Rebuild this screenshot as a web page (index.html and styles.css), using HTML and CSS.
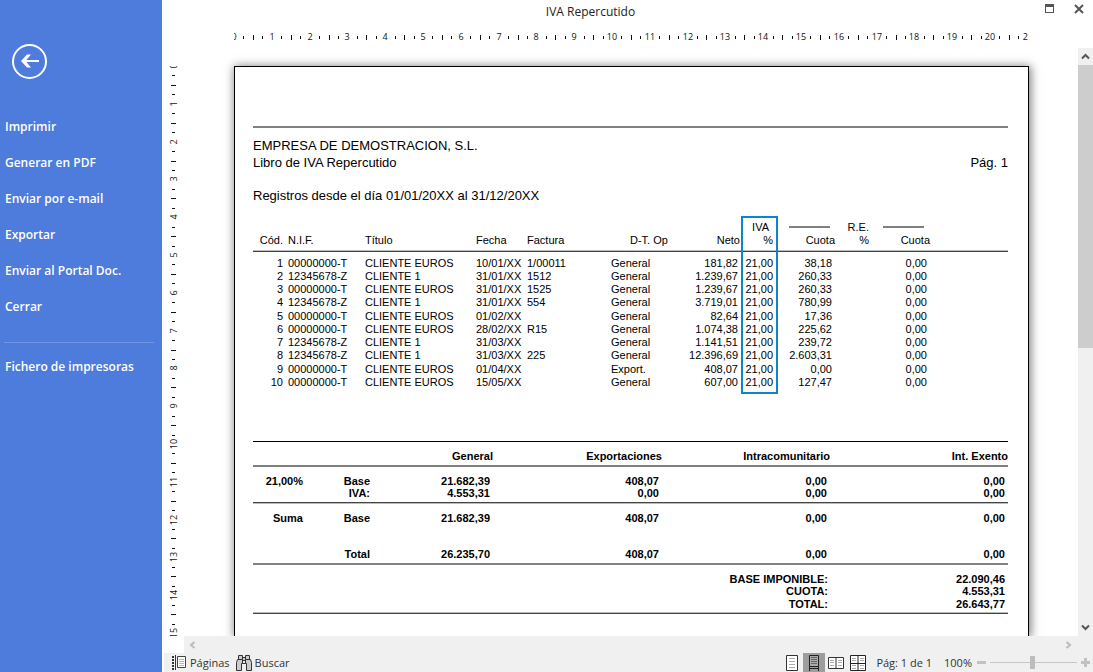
FILE: index.html
```html
<!DOCTYPE html>
<html lang="es">
<head>
<meta charset="utf-8">
<title>IVA Repercutido</title>
<link rel="stylesheet" href="styles.css">
</head>
<body>
<div class="app">
  <aside class="sidebar">
    <button class="back" type="button" aria-label="Volver">
      <svg width="35" height="35" viewBox="0 0 35 35" fill="none" stroke="#fff">
        <circle cx="17.5" cy="17.5" r="16.5" stroke-width="2"/>
        <path d="M10 17H27" stroke-width="2"/>
        <path d="M9 17L15 10.500H19L13.500 17L19 23.500H15Z" fill="#fff" stroke="none"/>
      </svg>
    </button>
    <nav class="menu">
      <button type="button">Imprimir</button>
      <button type="button">Generar en PDF</button>
      <button type="button">Enviar por e-mail</button>
      <button type="button">Exportar</button>
      <button type="button">Enviar al Portal Doc.</button>
      <button type="button">Cerrar</button>
      <hr>
      <button type="button">Fichero de impresoras</button>
    </nav>
  </aside>

  <main class="main">
    <header class="titlebar">
      <h1>IVA Repercutido</h1>
      <div class="window-buttons">
        <button type="button" aria-label="Maximizar">
          <svg width="10" height="10" viewBox="0 0 10 10"><path d="M0 0H9V9H0ZM1 3V8H8V3Z" fill="#555" fill-rule="evenodd"/></svg>
        </button>
        <button type="button" aria-label="Cerrar ventana">
          <svg width="10" height="10" viewBox="0 0 10 10"><path d="M1 1L9 9M9 1L1 9" stroke="#555" stroke-width="2"/></svg>
        </button>
      </div>
    </header>

    <div class="ruler-h"><svg id="ruler-h" width="100%" height="24"></svg></div>

    <div class="workspace">
      <div class="ruler-v"><svg id="ruler-v" width="22" height="100%"></svg></div>

      <div class="canvas">
        <article class="page">
          <div class="rule"></div>
          <div class="company">
            <p>EMPRESA DE DEMOSTRACION, S.L.</p>
            <div class="subtitle"><p>Libro de IVA Repercutido</p><p>Pág. 1</p></div>
          </div>
          <p class="range">Registros desde el día 01/01/20XX al 31/12/20XX</p>

          <div class="records-wrap">
            <table class="records">
              <colgroup>
                <col class="w-code"><col class="w-nif"><col class="w-name"><col class="w-date"><col class="w-invoice"><col class="w-type"><col class="w-net"><col class="w-vat"><col class="w-fee"><col class="w-pct"><col class="w-fee2"><col>
              </colgroup>
              <thead>
                <tr><th colspan="7"></th><th class="num vat">IVA</th><th><span class="bar"></span></th><th class="num">R.E.</th><th><span class="bar bar-wide"></span></th><th></th></tr>
                <tr><th class="num code">Cód.</th><th>N.I.F.</th><th>Título</th><th>Fecha</th><th>Factura</th><th class="type">D-T. Op</th><th class="num net">Neto</th><th class="num pct">%</th><th class="num">Cuota</th><th class="num">%</th><th class="num">Cuota</th><th></th></tr>
              </thead>
              <tbody>
                <tr><td>1</td><td>00000000-T</td><td>CLIENTE EUROS</td><td>10/01/XX</td><td>1/00011</td><td>General</td><td>181,82</td><td>21,00</td><td>38,18</td><td></td><td>0,00</td><td></td></tr>
                <tr><td>2</td><td>12345678-Z</td><td>CLIENTE 1</td><td>31/01/XX</td><td>1512</td><td>General</td><td>1.239,67</td><td>21,00</td><td>260,33</td><td></td><td>0,00</td><td></td></tr>
                <tr><td>3</td><td>00000000-T</td><td>CLIENTE EUROS</td><td>31/01/XX</td><td>1525</td><td>General</td><td>1.239,67</td><td>21,00</td><td>260,33</td><td></td><td>0,00</td><td></td></tr>
                <tr><td>4</td><td>12345678-Z</td><td>CLIENTE 1</td><td>31/01/XX</td><td>554</td><td>General</td><td>3.719,01</td><td>21,00</td><td>780,99</td><td></td><td>0,00</td><td></td></tr>
                <tr><td>5</td><td>00000000-T</td><td>CLIENTE EUROS</td><td>01/02/XX</td><td></td><td>General</td><td>82,64</td><td>21,00</td><td>17,36</td><td></td><td>0,00</td><td></td></tr>
                <tr><td>6</td><td>00000000-T</td><td>CLIENTE EUROS</td><td>28/02/XX</td><td>R15</td><td>General</td><td>1.074,38</td><td>21,00</td><td>225,62</td><td></td><td>0,00</td><td></td></tr>
                <tr><td>7</td><td>12345678-Z</td><td>CLIENTE 1</td><td>31/03/XX</td><td></td><td>General</td><td>1.141,51</td><td>21,00</td><td>239,72</td><td></td><td>0,00</td><td></td></tr>
                <tr><td>8</td><td>12345678-Z</td><td>CLIENTE 1</td><td>31/03/XX</td><td>225</td><td>General</td><td>12.396,69</td><td>21,00</td><td>2.603,31</td><td></td><td>0,00</td><td></td></tr>
                <tr><td>9</td><td>00000000-T</td><td>CLIENTE EUROS</td><td>01/04/XX</td><td></td><td>Export.</td><td>408,07</td><td>21,00</td><td>0,00</td><td></td><td>0,00</td><td></td></tr>
                <tr><td>10</td><td>00000000-T</td><td>CLIENTE EUROS</td><td>15/05/XX</td><td></td><td>General</td><td>607,00</td><td>21,00</td><td>127,47</td><td></td><td>0,00</td><td></td></tr>
              </tbody>
            </table>
            <div class="highlight"></div>
          </div>

          <table class="summary">
            <colgroup><col class="s-rate"><col class="s-concept"><col class="s-general"><col class="s-export"><col class="s-intra"><col></colgroup>
            <thead>
              <tr><th></th><th></th><th>General</th><th>Exportaciones</th><th>Intracomunitario</th><th>Int. Exento</th></tr>
            </thead>
            <tbody class="rate">
              <tr><th>21,00%</th><th>Base</th><td>21.682,39</td><td>408,07</td><td>0,00</td><td>0,00</td></tr>
              <tr><th></th><th>IVA:</th><td>4.553,31</td><td>0,00</td><td>0,00</td><td>0,00</td></tr>
            </tbody>
            <tbody class="sum">
              <tr><th>Suma</th><th>Base</th><td>21.682,39</td><td>408,07</td><td>0,00</td><td>0,00</td></tr>
              <tr><th></th><th>Total</th><td>26.235,70</td><td>408,07</td><td>0,00</td><td>0,00</td></tr>
            </tbody>
            <tfoot>
              <tr><th colspan="5">BASE IMPONIBLE:</th><td>22.090,46</td></tr>
              <tr><th colspan="5">CUOTA:</th><td>4.553,31</td></tr>
              <tr><th colspan="5">TOTAL:</th><td>26.643,77</td></tr>
            </tfoot>
          </table>
        </article>
      </div>

      <div class="scroll-v">
        <button type="button" aria-label="Subir"><svg width="9" height="7" viewBox="0 0 9 7"><path d="M1 5.500L4.500 2L8 5.500" fill="none" stroke="#555" stroke-width="2"/></svg></button>
        <div class="track"><div class="thumb"></div></div>
        <button type="button" aria-label="Bajar"><svg width="9" height="7" viewBox="0 0 9 7"><path d="M1 1.500L4.500 5L8 1.500" fill="none" stroke="#555" stroke-width="2"/></svg></button>
      </div>
    </div>

    <div class="scroll-h">
      <button type="button" aria-label="Izquierda"><svg width="7" height="8" viewBox="0 0 7 8"><path d="M5.500 1L2 4L5.500 7" fill="none" stroke="#bbb" stroke-width="2"/></svg></button>
      <button type="button" aria-label="Derecha"><svg width="7" height="8" viewBox="0 0 7 8"><path d="M1.500 1L5 4L1.500 7" fill="none" stroke="#bbb" stroke-width="2"/></svg></button>
    </div>

    <footer class="statusbar">
      <button class="tool" type="button">
        <svg width="15" height="15" viewBox="0 0 15 15"><path d="M1 1V15" stroke="#333" stroke-width="2" stroke-dasharray="2 1"/><path d="M3.500 0V15" stroke="#333"/><path d="M5.500 1.500H13.500V12.500H5.500Z" fill="#fff" stroke="#444"/><path d="M7 4.500H12M7 6.500H12M7 8.500H12M7 10.500H12" stroke="#bbb"/></svg>
        Páginas
      </button>
      <button class="tool" type="button">
        <svg width="16" height="16" viewBox="0 0 16 16" fill="#ccc" stroke="#333"><path d="M2.500 .500H6.500V4.500H2.500ZM9.500 .500H13.500V4.500H9.500ZM6.500 2.500H9.500V5.500H6.500Z"/><path d="M1.500 4.500H6.500V8.500H5.500V15.500H.500V7.500ZM9.500 4.500H14.500L15.500 7.500V15.500H10.500V8.500H9.500ZM6.500 5.500V8.500M9.500 5.500V8.500M6.500 8.500H9.500" /></svg>
        Buscar
      </button>
      <div class="views">
        <button type="button" aria-label="Una página"><svg width="12" height="16" viewBox="0 0 12 16"><path d="M.500 .500H11.500V15.500H.500Z" fill="#fff" stroke="#333"/><path d="M3 3.500H9M3 6.500H9M3 9.500H9M3 12.500H9" stroke="#aaa"/></svg></button>
        <button class="active" type="button" aria-label="Ancho de página"><svg width="12" height="16" viewBox="0 0 12 16"><path d="M1.500 .500H10.500V11.500H1.500Z" fill="#aaa" stroke="#222"/><path d="M3 2.500H9M3 4.500H9M3 6.500H9M3 8.500H9" stroke="#666"/><path d="M1.500 16V11.500H10.500V16M1.500 13.500H10.500" fill="none" stroke="#222"/></svg></button>
        <button type="button" aria-label="Dos páginas"><svg width="16" height="12" viewBox="0 0 16 12"><path d="M.500 .500H15.500V11.500H.500ZM8 .500V11.500" fill="#fff" stroke="#333"/><path d="M2 3.500H6M2 5.500H6M2 8.500H6M10 3.500H14M10 5.500H14M10 8.500H14" stroke="#aaa"/></svg></button>
        <button type="button" aria-label="Cuatro páginas"><svg width="16" height="16" viewBox="0 0 16 16"><path d="M.500 .500H15.500V15.500H.500ZM8 .500V15.500M.500 8.500H15.500" fill="#fff" stroke="#222"/><path d="M2 3.500H6M2 5.500H6M10 3.500H14M10 5.500H14M2 10.500H6M2 13.500H6M10 10.500H14M10 13.500H14" stroke="#aaa"/></svg></button>
      </div>
      <span class="page-count">Pág: 1 de 1</span>
      <label class="zoom-label" for="zoom">100%</label>
      <div class="zoom">
        <button type="button" aria-label="Reducir"><svg width="9" height="9" viewBox="0 0 9 9"><path d="M0 4.500H9" stroke="#c2c2c2" stroke-width="3"/></svg></button>
        <input id="zoom" type="range" min="0" max="200" value="98">
        <button type="button" aria-label="Ampliar"><svg width="9" height="9" viewBox="0 0 9 9"><path d="M0 4.500H9M4.500 0V9" stroke="#c2c2c2" stroke-width="3"/></svg></button>
      </div>
    </footer>
  </main>
</div>
<script src="rulers.js"></script>
</body>
</html>
```
FILE: styles.css
```css
* { box-sizing: border-box; }

body {
  margin: 0;
  font-family: "Open Sans", "Noto Sans", sans-serif;
  font-size: 12px;
  color: #222;
  background: #fff;
}

button {
  display: flex;
  align-items: center;
  justify-content: center;
  padding: 0;
  border: 0;
  background: none;
  font: inherit;
  color: inherit;
}

p, h1 { margin: 0; font-size: inherit; font-weight: 400; }

svg { display: block; flex: none; }

.app { display: flex; height: 100vh; }

/* Sidebar */
.sidebar {
  flex: 0 0 162px;
  padding-top: 44px;
  background: #4d7cdc;
  color: #fff;
}

.back { margin-left: 12px; }

.menu { margin-top: 29px; padding: 0 8px 0 4px; }

.menu button {
  width: 100%;
  height: 36px;
  padding-left: 1px;
  justify-content: flex-start;
  font-weight: 600;
}

.menu hr {
  height: 1px;
  margin: 18px 0 5px;
  border: 0;
  background: #7194e3;
}

/* Main area */
.main { flex: 1; min-width: 0; display: flex; flex-direction: column; }

.titlebar { display: flex; height: 24px; line-height: 24px; }
.titlebar h1 { flex: 1; text-align: center; }

.window-buttons {
  flex: 0 0 74px;
  display: flex;
  justify-content: flex-end;
  gap: 19px;
  height: 17px;
  padding-right: 9px;
}

.ruler-h { height: 24px; padding: 0 64px 0 72px; }
.ruler-h svg, .ruler-v svg { overflow: hidden; font-size: 9px; fill: #111; }

.workspace { flex: 1; min-height: 0; display: flex; }
.ruler-v { flex: 0 0 22px; padding-top: 18px; }

.canvas {
  flex: 1;
  min-width: 0;
  display: flex;
  padding: 18px 49px 0 50px;
  overflow: hidden;
}

.page {
  flex: 1;
  padding: 59px 20px 0 18px;
  border: 1px solid #000;
  border-bottom: 0;
  box-shadow: 1px 1px 9px 1px rgba(0, 0, 0, 0.5);
  background: #fff;
  font-family: "Liberation Sans", Arial, sans-serif;
  font-size: 11px;
  line-height: 13px;
  color: #000;
}

.rule { height: 2px; background: #808080; }
.company { margin-top: 9px; }
.company, .range { font-size: 13px; line-height: 17px; }
.subtitle { display: flex; justify-content: space-between; }
.range { margin-top: 16px; }

/* Invoice records */
.records-wrap { position: relative; margin-top: 12px; padding-top: 5px; }

table { width: 100%; table-layout: fixed; border-collapse: separate; border-spacing: 0; }
th, td { padding: 0; font-weight: 400; text-align: left; white-space: nowrap; }

.w-code { width: 35px; }
.w-nif { width: 77px; }
.w-name { width: 111px; }
.w-date { width: 51px; }
.w-invoice { width: 84px; }
.w-type { width: 70px; }
.w-net { width: 60px; }
.w-vat { width: 37px; }
.w-fee { width: 57px; }
.w-pct { width: 34px; }
.w-fee2 { width: 61px; }

.records .num { text-align: right; }
.records thead tr:last-child th {
  padding-bottom: 4px;
  border-bottom: 1px solid #444;
  box-shadow: inset 0 -1px #bbb;
}
.records th.vat { padding-right: 9px; }
.records th.net { padding-right: 1px; }
.records th.pct { padding-right: 5px; }
.records th.code { padding-right: 5px; }
.records th.type { padding-left: 19px; }
.bar { display: block; width: 41px; height: 2px; margin: 0 0 2px 11px; background: #808080; }
.bar-wide { margin-left: 14px; }

.records tbody::before { content: ""; display: block; height: 5px; }
.records tbody td { height: 13px; vertical-align: bottom; }
.records tbody tr:nth-child(4n+5) td { height: 14px; }
.records td:nth-child(1), .records td:nth-child(n+7) { text-align: right; }
.records td:nth-child(1) { padding-right: 5px; }
.records td:nth-child(7) { padding-right: 3px; }
.records td:nth-child(8) { padding-right: 5px; }
.records td:nth-child(9), .records td:nth-child(11) { padding-right: 3px; }

.highlight {
  position: absolute;
  top: 0;
  bottom: -5px;
  left: 488px;
  width: 37px;
  border: 2px solid #0d86c8;
}

/* Totals */
.summary { margin-top: 52px; border-top: 1px solid #000; border-bottom: 1px solid #444; line-height: 12px; }
.summary th, .summary td { font-weight: 700; text-align: right; }
.s-rate { width: 50px; }
.s-concept { width: 68px; }
.s-general { width: 122px; }
.s-export { width: 169px; }
.s-intra { width: 168px; }

.summary th:nth-child(2) { padding-right: 1px; }
.summary td { padding-right: 3px; }
.summary thead th { padding: 8px 0 3px; border-bottom: 2px solid #808080; }
.summary tbody tr:first-child > * { padding-top: 8px; }
.summary .rate tr:last-child > * {
  padding-bottom: 4px;
  border-bottom: 1px solid #bbb;
  box-shadow: inset 0 -1px #444;
}
.summary .sum tr:last-child > * {
  padding-top: 24px;
  padding-bottom: 3px;
  border-bottom: 2px solid #808080;
}
.summary tfoot th { padding-right: 2px; }
.summary tfoot tr:first-child > * { padding-top: 8px; }
.summary tfoot tr:last-child > * {
  padding-top: 1px;
  padding-bottom: 3px;
  box-shadow: inset 0 -1px #bbb;
}

/* Scroll bars */
.scroll-v { flex: 0 0 15px; display: flex; flex-direction: column; background: #f0f0f0; }
.scroll-v button { height: 17px; }
.track { flex: 1; }
.thumb { height: 51%; background: #cdcdcd; }

.scroll-h {
  display: flex;
  justify-content: space-between;
  height: 17px;
  margin-left: 22px;
  padding: 0 20px 0 4px;
  background: #f0f0f0;
}
.scroll-h button { width: 9px; }

/* Status bar */
.statusbar {
  display: flex;
  align-items: center;
  height: 19px;
  margin-left: 2px;
  padding: 0 3px 0 8px;
  background: #f0f0f0;
  font-size: 11px;
  color: #333;
}
.tool { gap: 3px; margin-right: 6px; }
.views { display: flex; align-self: stretch; margin-left: auto; }
.views button { width: 22px; }
.views .active { background: #9d9d9d; }
.page-count { margin-left: 7px; }
.zoom-label { margin-left: 12px; }
.zoom { display: flex; align-items: center; gap: 4px; margin-left: 5px; }

.zoom input {
  appearance: none;
  width: 87px;
  height: 13px;
  margin: 0;
  background: linear-gradient(#c6c6c6, #c6c6c6) center / 100% 1px no-repeat;
}
.zoom input::-webkit-slider-thumb {
  appearance: none;
  width: 5px;
  height: 13px;
  background: #bdbdbd;
}
```
FILE: rulers.js
```js
// Draws both centimetre rulers; one centimetre is 37.8 px at 100% zoom.
const CM = 37.8;
const NS = "http://www.w3.org/2000/svg";

function add(svg, name, attrs, text) {
  const node = document.createElementNS(NS, name);
  for (const key in attrs) node.setAttribute(key, attrs[key]);
  if (text !== undefined) node.textContent = text;
  svg.appendChild(node);
}

function draw(id, vertical) {
  const svg = document.getElementById(id);
  const box = svg.getBoundingClientRect();
  const length = vertical ? box.height : box.width;
  svg.replaceChildren();
  for (let cm = 0; cm * CM < length + 3; cm++) {
    const at = Math.round(cm * CM);
    add(svg, "text", {
      "text-anchor": "middle",
      transform: vertical ? `translate(15 ${at}) rotate(-90)` : `translate(${at} 16)`
    }, String(cm));
    for (const quarter of [1, 2, 3]) {
      const pos = Math.round((cm + quarter / 4) * CM);
      const size = quarter === 2 ? 5 : 3;
      const edge = quarter === 2 ? 0 : 1;
      add(svg, "rect", vertical
        ? { x: 9 + edge, y: pos, width: size, height: 1 }
        : { x: pos, y: 11 + edge, width: 1, height: size });
    }
  }
}

function drawAll() {
  draw("ruler-h", false);
  draw("ruler-v", true);
}

drawAll();
window.addEventListener("resize", drawAll);
```
